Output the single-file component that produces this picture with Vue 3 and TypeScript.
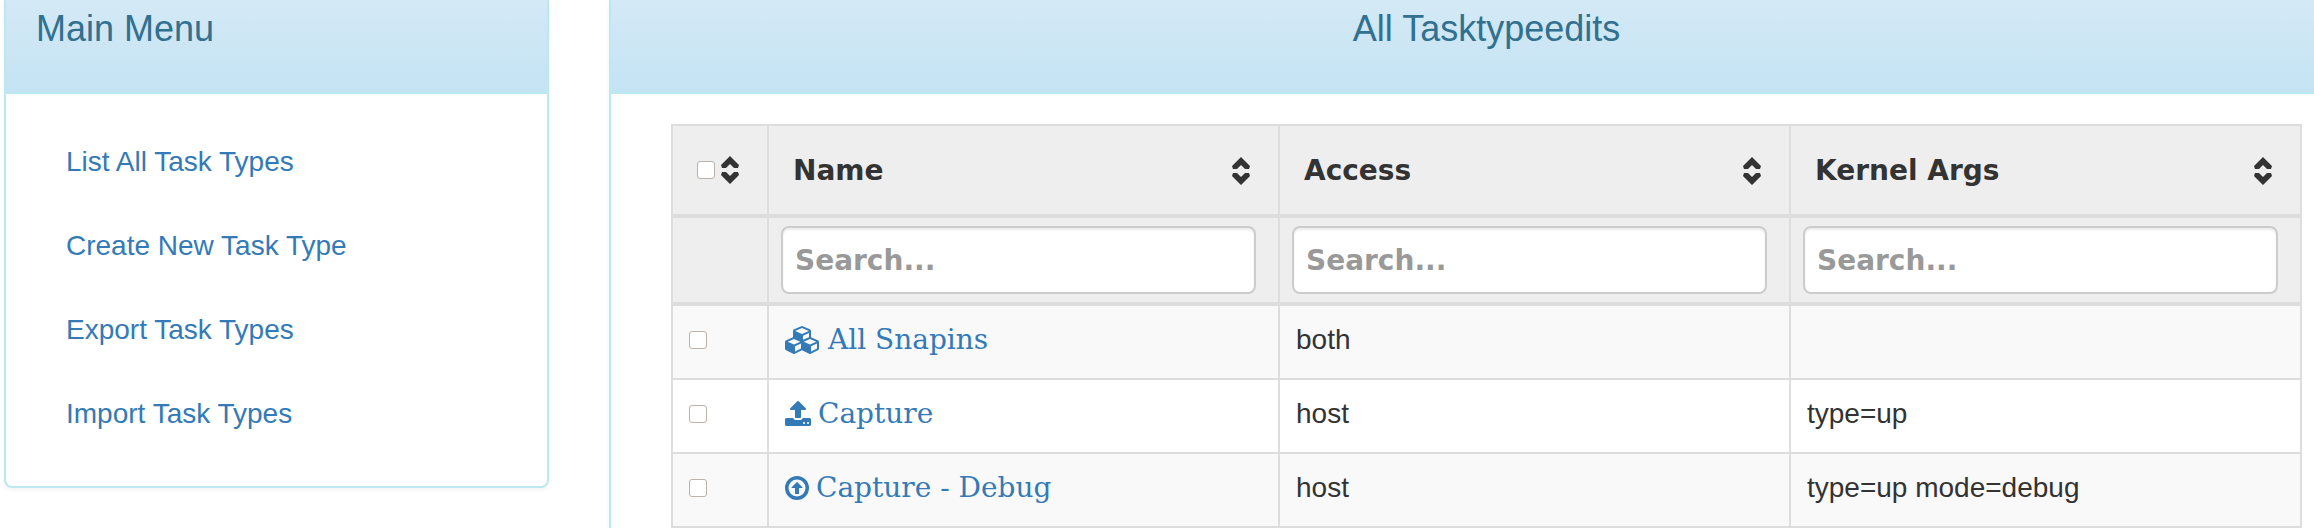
<script setup lang="ts">
import { computed, reactive, ref } from 'vue'

interface MenuItem {
  label: string
  href: string
}

interface TaskType {
  id: number
  name: string
  icon: 'cubes' | 'upload' | 'circle-up'
  access: string
  args: string
}

type Column = 'name' | 'access' | 'args'

const menu: MenuItem[] = [
  { label: 'List All Task Types', href: '#list' },
  { label: 'Create New Task Type', href: '#add' },
  { label: 'Export Task Types', href: '#export' },
  { label: 'Import Task Types', href: '#import' },
]

const columns: { key: Column; label: string }[] = [
  { key: 'name', label: 'Name' },
  { key: 'access', label: 'Access' },
  { key: 'args', label: 'Kernel Args' },
]

const sortArrows = 'M10 0l9 9-1 3h-4l-4-4-4 4h-4l-1-3zM10 28l9-9-1-3h-4l-4 4-4-4h-4l-1 3z'

const icons = {
  cubes: {
    box: '0 0 2304 1792',
    path: 'M640 1632l384-192v-314l-384 164v342zm-64-454l404-173-404-173-404 173zm1088 454l384-192v-314l-384 164v342zm-64-454l404-173-404-173-404 173zm-448-293l384-165v-266l-384 164v267zm-64-379l441-189-441-189-441 189zm1088 518v416q0 36-19 67t-52 47l-448 224q-25 14-57 14t-57-14l-448-224q-4-2-7-4-2 2-7 4l-448 224q-25 14-57 14t-57-14l-448-224q-33-16-52-47t-19-67v-416q0-38 21.5-70t56.5-48l434-186v-400q0-38 21.5-70t56.5-48l448-192q23-10 50-10t50 10l448 192q35 16 56.5 48t21.5 70v400l434 186q36 16 57 48t21 70z',
  },
  upload: {
    box: '64 0 1664 1792',
    path: 'M1344 1472q0-26-19-45t-45-19-45 19-19 45 19 45 45 19 45-19 19-45zm256 0q0-26-19-45t-45-19-45 19-19 45 19 45 45 19 45-19 19-45zm128-224v320q0 40-28 68t-68 28h-1472q-40 0-68-28t-28-68v-320q0-40 28-68t68-28h427q21 56 70.5 92t110.5 36h256q61 0 110.5-36t70.5-92h427q40 0 68 28t28 68zm-325-648q-17 40-59 40h-256v448q0 26-19 45t-45 19h-256q-26 0-45-19t-19-45v-448h-256q-42 0-59-40-17-39 14-69l448-448q18-19 45-19t45 19l448 448q31 30 14 69z',
  },
  'circle-up': {
    box: '128 0 1536 1792',
    path: 'M896 128a768 768 0 1 0 0 1536a768 768 0 1 0 0-1536zM896 352a544 544 0 1 1 0 1088a544 544 0 1 1 0-1088zM873 521q10-9 23-9t23 9l320 320q15 16 7 35t-30 20h-192v352q0 32-32 32h-192q-32 0-32-32v-352h-192q-22-1-30-20t9-35z',
  },
}

const rows: TaskType[] = [
  { id: 1, name: 'All Snapins', icon: 'cubes', access: 'both', args: '' },
  { id: 2, name: 'Capture', icon: 'upload', access: 'host', args: 'type=up' },
  { id: 3, name: 'Capture - Debug', icon: 'circle-up', access: 'host', args: 'type=up mode=debug' },
]

const filters = reactive<Record<Column, string>>({ name: '', access: '', args: '' })
const selected = ref<number[]>([])
const sortKey = ref<Column | 'selected' | null>(null)
const descending = ref(false)

const visibleRows = computed(() => {
  const found = rows.filter((row) =>
    columns.every(({ key }) => row[key].toLowerCase().includes(filters[key].toLowerCase())),
  )
  const key = sortKey.value
  if (!key) return found
  const value = (row: TaskType) =>
    key === 'selected' ? String(selected.value.includes(row.id)) : row[key]
  const sign = descending.value ? -1 : 1
  return found.sort((a, b) => sign * value(a).localeCompare(value(b)))
})

const allSelected = computed({
  get: () => selected.value.length === rows.length,
  set: (on: boolean) => {
    selected.value = on ? rows.map((row) => row.id) : []
  },
})

function sortBy(key: Column | 'selected') {
  descending.value = sortKey.value === key && !descending.value
  sortKey.value = key
}
</script>

<template>
  <div class="page">
    <div class="layout">
      <aside class="panel">
        <h4 class="panel-heading">Main Menu</h4>
        <nav class="menu" aria-label="Main Menu">
          <ul>
            <li v-for="item in menu" :key="item.label">
              <a :href="item.href">{{ item.label }}</a>
            </li>
          </ul>
        </nav>
      </aside>

      <main class="panel">
        <h4 class="panel-heading centered">All Tasktypeedits</h4>
        <div class="panel-body">
          <table>
            <thead>
              <tr class="titles">
                <th class="check-col">
                  <div class="head-check">
                    <input v-model="allSelected" type="checkbox" aria-label="Select all task types" />
                    <button type="button" aria-label="Sort by selection" @click="sortBy('selected')">
                      <svg class="sort" viewBox="0 0 20 28" aria-hidden="true">
                        <path :d="sortArrows" />
                      </svg>
                    </button>
                  </div>
                </th>
                <th v-for="column in columns" :key="column.key">
                  <button type="button" class="head-sort" @click="sortBy(column.key)">
                    {{ column.label }}
                    <svg class="sort" viewBox="0 0 20 28" aria-hidden="true">
                      <path :d="sortArrows" />
                    </svg>
                  </button>
                </th>
              </tr>
              <tr class="filters">
                <td></td>
                <td v-for="column in columns" :key="column.key">
                  <input
                    v-model="filters[column.key]"
                    type="text"
                    placeholder="Search..."
                    :aria-label="`Search ${column.label}`"
                  />
                </td>
              </tr>
            </thead>
            <tbody>
              <tr v-for="row in visibleRows" :key="row.id">
                <td>
                  <div class="row-check">
                    <input v-model="selected" type="checkbox" :value="row.id" :aria-label="`Select ${row.name}`" />
                  </div>
                </td>
                <td>
                  <a class="task" :href="`#edit-${row.id}`">
                    <svg :viewBox="icons[row.icon].box" height="28" aria-hidden="true">
                      <path fill-rule="evenodd" :d="icons[row.icon].path" />
                    </svg>
                    <span>{{ row.name }}</span>
                  </a>
                </td>
                <td>{{ row.access }}</td>
                <td>{{ row.args }}</td>
              </tr>
            </tbody>
          </table>
        </div>
      </main>
    </div>
  </div>
</template>

<style>
body {
  margin: 0;
  background: #fff;
}
</style>

<style scoped>
* {
  box-sizing: border-box;
}

.page {
  height: 100vh;
  overflow: hidden;
  color: #333;
  font: 28px/40px "Liberation Sans", Arial, sans-serif;
}

/* The content panel runs past the right edge of the window. */
.layout {
  display: grid;
  grid-template-columns: 545fr 1755fr;
  gap: 60px;
  align-items: start;
  margin-right: -50px;
  padding-left: 4px;
}

.panel {
  background: #fff;
  border: 2px solid #bce8f1;
  border-top: 0;
  border-radius: 0 0 8px 8px;
  box-shadow: 0 2px 4px rgba(0, 0, 0, 0.05);
}

.panel-heading {
  margin: 0;
  padding: 9px 30px 43px;
  border-bottom: 2px solid #bce8f1;
  background: linear-gradient(#d4e9f6, #c4e3f3);
  color: #31708f;
  font-size: 36px;
  font-weight: 400;
  line-height: 40px;
}

.centered {
  text-align: center;
}

.menu {
  padding: 28px 30px 32px;
}

.menu ul {
  display: flex;
  flex-direction: column;
  gap: 4px;
  margin: 0;
  padding: 0;
  list-style: none;
}

a {
  color: #337ab7;
  text-decoration: none;
}

.menu a {
  display: block;
  padding: 20px 30px;
}

.panel-body {
  padding: 30px 60px;
}

table {
  width: 100%;
  table-layout: fixed;
  border-collapse: separate;
  border-spacing: 0;
  border: 2px solid #ddd;
  border-width: 2px 0 0 2px;
}

th,
td {
  border: 0 solid #ddd;
  border-width: 0 2px 2px 0;
}

.check-col {
  width: 96px;
}

thead th,
thead td {
  padding: 0;
  border-bottom-width: 4px;
  background: #eee;
}

button {
  padding: 0;
  border: 0;
  background: none;
  color: inherit;
  cursor: pointer;
}

.head-check {
  display: flex;
  align-items: center;
  justify-content: space-between;
  padding: 24px 27px 24px 24px;
}

.head-check button {
  display: flex;
  height: 40px;
  align-items: center;
}

.head-sort {
  display: flex;
  align-items: center;
  justify-content: space-between;
  width: 100%;
  padding: 25px 27px 23px 24px;
  font: bold 28px/40px "DejaVu Sans", Verdana, sans-serif;
}

.sort {
  width: 20px;
  height: 28px;
  fill: #333;
}

thead .filters td {
  padding: 8px 22px 8px 12px;
}

input[type='text'] {
  display: block;
  width: 100%;
  height: 68px;
  padding: 12px;
  border: 2px solid #ccc;
  border-radius: 8px;
  background: #fff;
  box-shadow: inset 0 2px 2px rgba(0, 0, 0, 0.075);
  color: #555;
  font: bold 28px/40px "DejaVu Sans", Verdana, sans-serif;
}

input::placeholder {
  color: #999;
  opacity: 1;
}

input[type='checkbox'] {
  appearance: none;
  width: 18px;
  height: 18px;
  margin: 0;
  border: 1px solid #bbb3aa;
  border-radius: 3px;
  background: #fff;
}

input[type='checkbox']:checked {
  background: #337ab7;
}

tbody td {
  height: 74px;
  padding: 14px 16px 18px;
}

tbody tr:nth-child(odd) td {
  background: #f9f9f9;
}

.row-check {
  display: flex;
  align-items: center;
  height: 40px;
}

.task {
  display: flex;
  align-items: center;
  gap: 7px;
  font-family: "DejaVu Serif", serif;
}

.task svg {
  height: 28px;
  fill: currentColor;
}
</style>
